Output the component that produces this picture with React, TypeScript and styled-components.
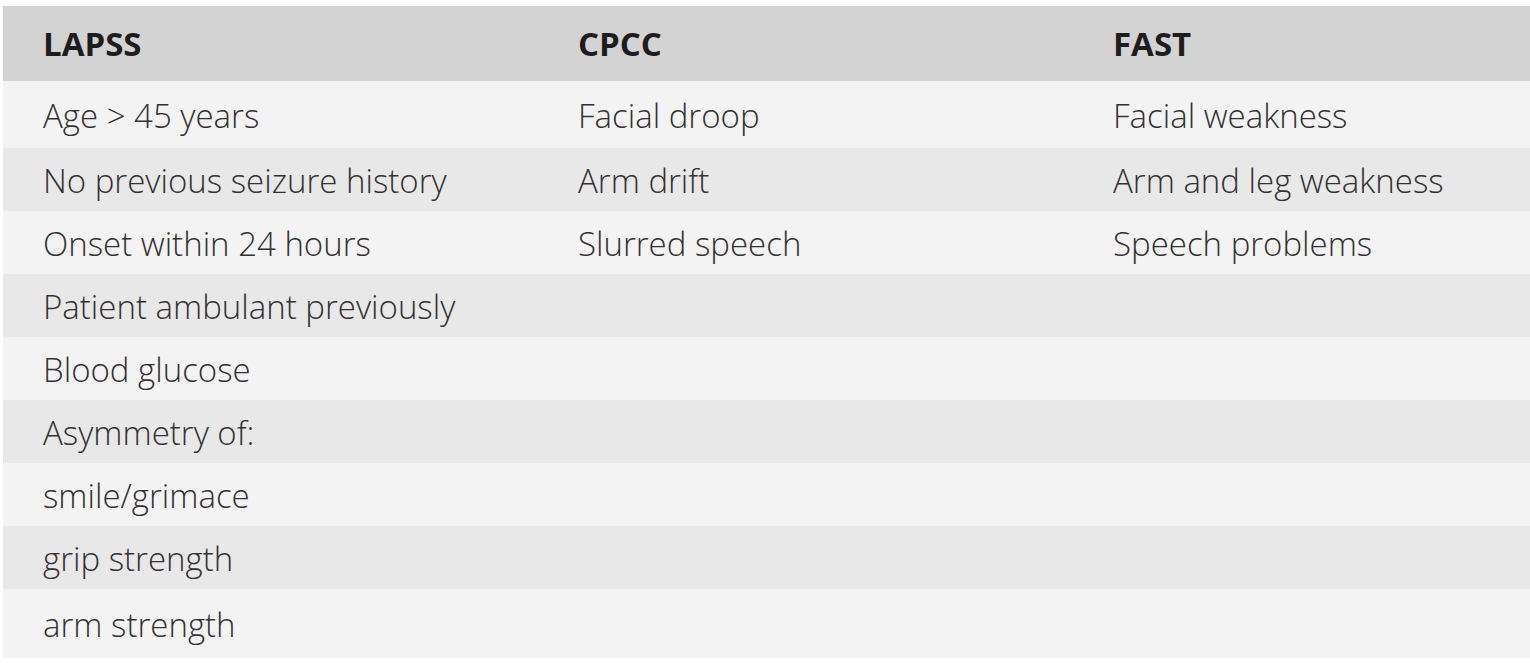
import styled, { createGlobalStyle } from 'styled-components'

const GlobalStyle = createGlobalStyle`
  *, *::before, *::after {
    box-sizing: border-box;
  }
  html, body {
    margin: 0;
    padding: 0;
    background: #ffffff;
    overflow: hidden;
  }
  body {
    font-family: "Open Sans", "Noto Sans", sans-serif;
    color: #231f20;
  }
`

type Row = [string, string, string]

const rows: Row[] = [
  ['Age > 45 years', 'Facial droop', 'Facial weakness'],
  ['No previous seizure history', 'Arm drift', 'Arm and leg weakness'],
  ['Onset within 24 hours', 'Slurred speech', 'Speech problems'],
  ['Patient ambulant previously', '', ''],
  ['Blood glucose', '', ''],
  ['Asymmetry of:', '', ''],
  ['smile/grimace', '', ''],
  ['grip strength', '', ''],
  ['arm strength', '', ''],
]

const Page = styled.div`
  padding: 6px 0 0 3px;
`

const Table = styled.div`
  display: grid;
  grid-template-columns: 535px 535px 1fr;
`

const HeadCell = styled.div`
  height: 75px;
  display: flex;
  align-items: center;
  padding-left: 40px;
  background: #d3d3d3;
  font-size: 33px;
  font-weight: 700;
  color: #1f1c1d;
`

const Cell = styled.div<{ $alt: boolean; $h: number }>`
  height: ${p => p.$h}px;
  display: flex;
  align-items: center;
  padding: 2px 0 0 40px;
  background: ${p => (p.$alt ? '#e8e8e8' : '#f3f3f3')};
  font-size: 33px;
  font-weight: 300;
  color: #333132;
  white-space: nowrap;
`

export default function App() {
  return <>
    <GlobalStyle />
    <Page>
      <Table>
        <HeadCell>LAPSS</HeadCell>
        <HeadCell>CPCC</HeadCell>
        <HeadCell>FAST</HeadCell>
        {rows.map((row, i) => {
          // first and last body rows are a little taller in the source
          const h = i === 0 ? 67 : i === rows.length - 1 ? 69 : 63
          return row.map((text, j) => <Cell key={`${i}-${j}`} $alt={i % 2 === 1} $h={h}>
            {text}
          </Cell>)
        })}
      </Table>
    </Page>
  </>
}
